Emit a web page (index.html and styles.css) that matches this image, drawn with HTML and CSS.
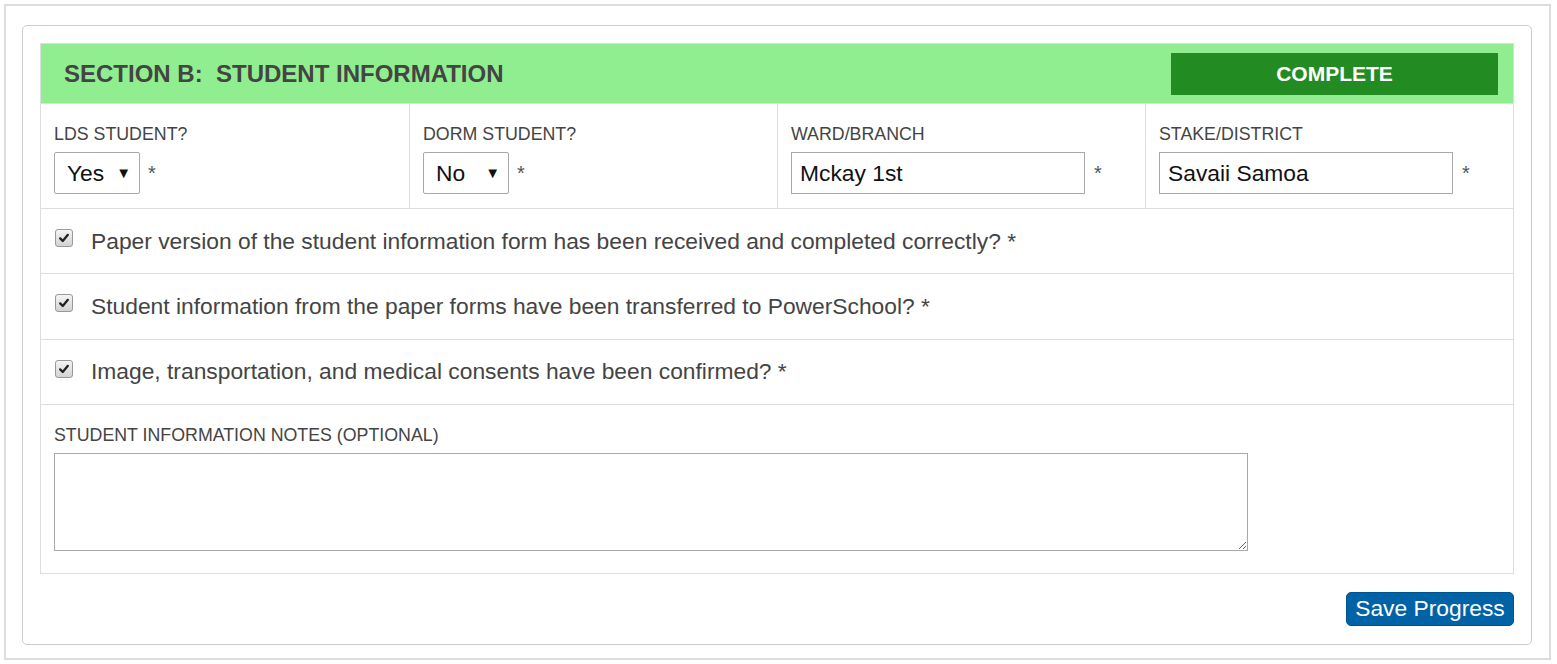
FILE: index.html
```html
<!DOCTYPE html>
<html lang="en">
<head>
<meta charset="utf-8">
<title>Section B: Student Information</title>
<link rel="stylesheet" href="styles.css">
</head>
<body>
<div class="frame">
  <div class="panel">
    <div class="section">
      <div class="section-head">
        <h2 class="section-title">SECTION B:&nbsp; STUDENT INFORMATION</h2>
        <div class="status">COMPLETE</div>
      </div>
      <div class="field-row">
        <div class="field">
          <label class="field-label">LDS STUDENT?</label>
          <div class="control-line">
            <div class="select-wrap">
              <select class="select"><option>Yes</option><option>No</option></select>
              <span class="select-arrow">&#9660;</span>
            </div>
            <span class="req">*</span>
          </div>
        </div>
        <div class="field">
          <label class="field-label">DORM STUDENT?</label>
          <div class="control-line">
            <div class="select-wrap">
              <select class="select"><option>No</option><option>Yes</option></select>
              <span class="select-arrow">&#9660;</span>
            </div>
            <span class="req">*</span>
          </div>
        </div>
        <div class="field">
          <label class="field-label">WARD/BRANCH</label>
          <div class="control-line">
            <input class="text-input" type="text" value="Mckay 1st">
            <span class="req">*</span>
          </div>
        </div>
        <div class="field">
          <label class="field-label">STAKE/DISTRICT</label>
          <div class="control-line">
            <input class="text-input" type="text" value="Savaii Samoa">
            <span class="req">*</span>
          </div>
        </div>
      </div>
      <div class="check-row">
        <span class="checkbox"><svg viewBox="0 0 16 16"><path d="M3.6 8.4 L6.6 11.4 L12.4 4.4" fill="none" stroke="#222" stroke-width="2.6" stroke-linecap="round" stroke-linejoin="round"/></svg></span>
        <span class="check-text">Paper version of the student information form has been received and completed correctly? *</span>
      </div>
      <div class="check-row">
        <span class="checkbox"><svg viewBox="0 0 16 16"><path d="M3.6 8.4 L6.6 11.4 L12.4 4.4" fill="none" stroke="#222" stroke-width="2.6" stroke-linecap="round" stroke-linejoin="round"/></svg></span>
        <span class="check-text">Student information from the paper forms have been transferred to PowerSchool? *</span>
      </div>
      <div class="check-row">
        <span class="checkbox"><svg viewBox="0 0 16 16"><path d="M3.6 8.4 L6.6 11.4 L12.4 4.4" fill="none" stroke="#222" stroke-width="2.6" stroke-linecap="round" stroke-linejoin="round"/></svg></span>
        <span class="check-text">Image, transportation, and medical consents have been confirmed? *</span>
      </div>
      <div class="notes-row">
        <label class="field-label">STUDENT INFORMATION NOTES (OPTIONAL)</label>
        <textarea class="notes"></textarea>
      </div>
    </div>
    <div class="actions">
      <button class="save-btn" type="button">Save Progress</button>
    </div>
  </div>
</div>
</body>
</html>
```
FILE: styles.css
```css
* { box-sizing: border-box; }
html, body { margin: 0; padding: 0; background: #fff; }
body {
  font-family: "Liberation Sans", Arial, sans-serif;
  color: #444;
  padding: 4px 6px 4px 4px;
}
.frame {
  border: 2px solid #ddd;
  height: 656px;
  padding: 19px 17px 13px 16px;
}
.panel {
  border: 1px solid #ccc;
  border-radius: 5px;
  padding: 17px 17px 18px 17px;
  height: 100%;
}
.section {
  border: 1px solid #ddd;
}
.section-head {
  background: #90ee90;
  height: 59px;
  display: flex;
  align-items: center;
  justify-content: space-between;
  padding: 0 15px 0 23px;
}
.section-title {
  margin: 0;
  font-size: 24px;
  font-weight: bold;
  color: #444;
}
.status {
  background: #228b22;
  color: #fff;
  font-weight: bold;
  font-size: 21px;
  width: 327px;
  height: 42px;
  display: flex;
  align-items: center;
  justify-content: center;
}
.field-row {
  display: grid;
  grid-template-columns: 1fr 1fr 1fr 1fr;
  border-top: 1px solid #ddd;
  height: 105px;
}
.field {
  padding: 21px 14px 0 13px;
  border-left: 1px solid #ddd;
}
.field:first-child { border-left: none; }
.field-label {
  display: block;
  font-size: 17.8px;
  color: #444;
  line-height: 18px;
  margin-bottom: 9px;
}
.control-line {
  display: flex;
  align-items: center;
}
.select-wrap {
  position: relative;
  width: 86px;
  height: 42px;
}
.select {
  appearance: none;
  -webkit-appearance: none;
  width: 100%;
  height: 100%;
  border: 1px solid #a9a9a9;
  border-radius: 2px;
  background: #fff;
  font-family: "Liberation Sans", Arial, sans-serif;
  font-size: 22.8px;
  color: #111;
  padding: 0 0 0 12px;
  margin: 0;
}
.select-arrow {
  position: absolute;
  right: 9px;
  top: 12px;
  font-size: 15px;
  color: #111;
  pointer-events: none;
}
.req {
  font-size: 20px;
  color: #555;
  margin-left: 8px;
}
.text-input {
  width: 294px;
  height: 42px;
  border: 1px solid #a9a9a9;
  font-family: "Liberation Sans", Arial, sans-serif;
  font-size: 22.8px;
  color: #111;
  padding: 0 8px;
  margin: 0;
}
.text-input + .req { margin-left: 9px; }
.check-row {
  border-top: 1px solid #ddd;
  height: 65.3px;
  display: flex;
  align-items: center;
  padding: 0 0 0 14px;
}
.checkbox {
  width: 18px;
  height: 18px;
  border: 1px solid #999;
  border-radius: 3px;
  background: linear-gradient(#f4f4f4, #d2d2d2);
  display: flex;
  align-items: center;
  justify-content: center;
  margin-right: 18px;
  margin-top: -6px;
}
.checkbox svg { width: 14px; height: 14px; display: block; }
.check-text {
  font-size: 22.8px;
  color: #444;
}
.notes-row {
  border-top: 1px solid #ddd;
  padding: 21px 14px 22px 13px;
}
.notes-row .field-label { margin-bottom: 9px; }
.notes {
  display: block;
  width: 1194px;
  height: 98px;
  border: 1px solid #a9a9a9;
  margin: 0;
  font-family: "Liberation Sans", Arial, sans-serif;
  font-size: 16px;
}
.actions {
  display: flex;
  justify-content: flex-end;
  margin-top: 18px;
}
.save-btn {
  background: #0063a6;
  color: #fff;
  border: 1px solid #005590;
  border-radius: 5px;
  font-family: "Liberation Sans", Arial, sans-serif;
  font-size: 22.8px;
  height: 34px;
  width: 168px;
  padding: 0;
  cursor: pointer;
}
```
